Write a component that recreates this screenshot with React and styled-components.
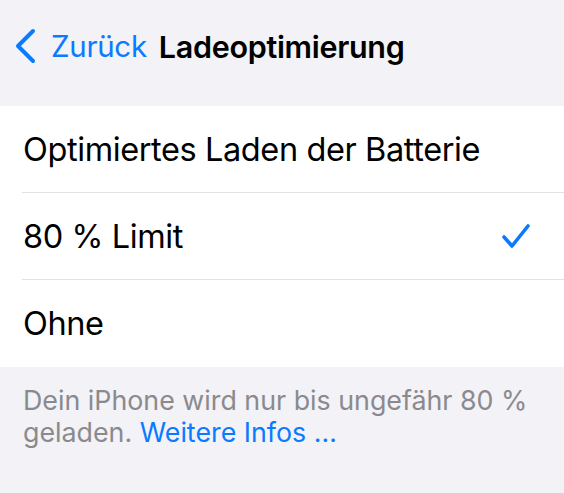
import React from "react";
import styled, { createGlobalStyle } from "styled-components";

const GlobalStyle = createGlobalStyle`
  html, body {
    margin: 0;
    padding: 0;
    background: #f2f2f7;
  }
  body {
    font-family: Inter, "Liberation Sans", Arial, sans-serif;
    -webkit-font-smoothing: antialiased;
  }
`;

const Page = styled.div`
  width: 564px;
  min-height: 493px;
  background: #f2f2f7;
`;

const NavBar = styled.div`
  display: flex;
  align-items: center;
  height: 92px;
  padding: 0 14px;
  box-sizing: border-box;
`;

const BackButton = styled.div`
  display: flex;
  align-items: center;
  gap: 15px;
  color: #0a7aff;
  font-size: 29.5px;
  letter-spacing: -0.3px;
`;

const Title = styled.div`
  margin-left: 12px;
  color: #000;
  font-size: 30.5px;
  font-weight: 600;
  letter-spacing: -0.3px;
`;

const List = styled.div`
  margin-top: 14px;
  background: #fff;
  padding-left: 22px;
`;

const Row = styled.div`
  display: flex;
  align-items: center;
  justify-content: space-between;
  height: 87px;
  box-sizing: border-box;
  padding-right: 33px;
  border-bottom: ${(p) => (p.$last ? "none" : "1px solid #e2e2e6")};
`;

const RowLabel = styled.span`
  padding-left: 1px;
  color: #000;
  font-size: 32.5px;
  letter-spacing: -0.4px;
`;

const Footer = styled.p`
  margin: 0;
  padding: 17px 23px 0;
  color: #8a8a8e;
  font-size: 26.8px;
  line-height: 32px;
  letter-spacing: 0;
`;

const Link = styled.span`
  color: #0a7aff;
`;

const Chevron = () => (
  <svg width="22" height="36" viewBox="0 0 22 36">
    <path d="M19 3 L4 18 L19 33" fill="none" stroke="#0a7aff" strokeWidth="4" strokeLinecap="round" strokeLinejoin="round" />
  </svg>
);

const Check = () => (
  <svg width="30" height="28" viewBox="0 0 30 28">
    <path d="M3 15 L11 24 L27 4" fill="none" stroke="#0a7aff" strokeWidth="3.6" strokeLinecap="round" strokeLinejoin="round" />
  </svg>
);

const options = [
  { label: "Optimiertes Laden der Batterie", checked: false },
  { label: "80 % Limit", checked: true },
  { label: "Ohne", checked: false },
];

export default function App() {
  return (
    <Page>
      <GlobalStyle />
      <NavBar>
        <BackButton>
          <Chevron />
          Zurück
        </BackButton>
        <Title>Ladeoptimierung</Title>
      </NavBar>
      <List>
        {options.map((o, i) => (
          <Row key={o.label} $last={i === options.length - 1}>
            <RowLabel>{o.label}</RowLabel>
            {o.checked ? <Check /> : null}
          </Row>
        ))}
      </List>
      <Footer>
        Dein iPhone wird nur bis ungefähr 80 % geladen. <Link>Weitere Infos …</Link>
      </Footer>
    </Page>
  );
}
